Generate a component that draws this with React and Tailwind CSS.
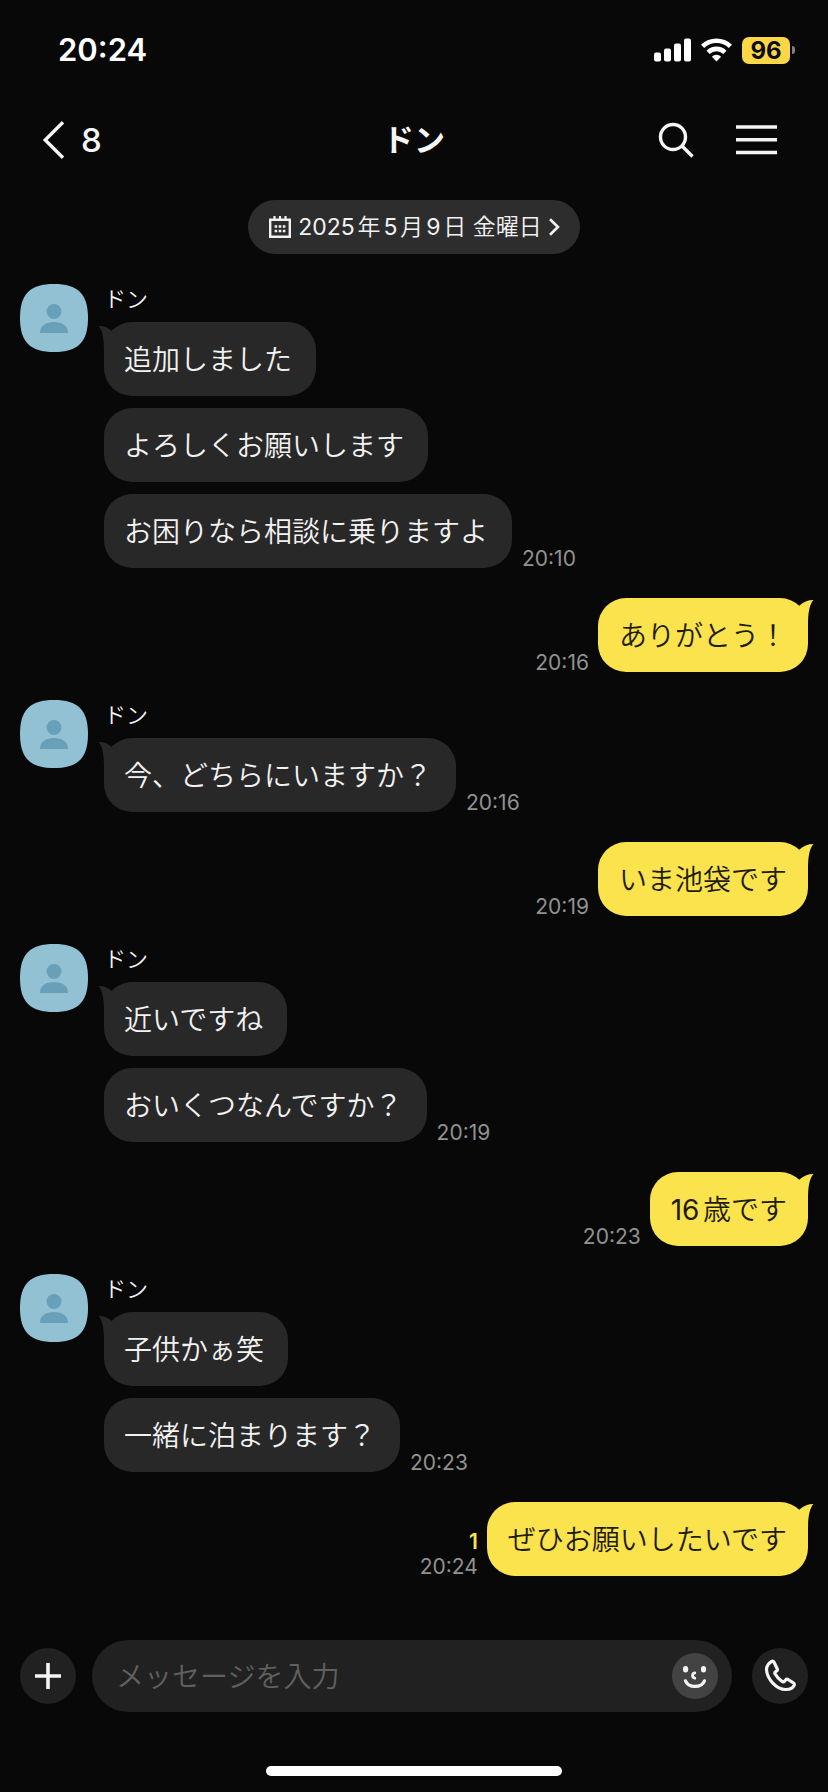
import React, { useState } from 'react';

const groups = [
  { from: 'them', time: '20:10', messages: ['追加しました', 'よろしくお願いします', 'お困りなら相談に乗りますよ'] },
  { from: 'me', time: '20:16', messages: ['ありがとう！'] },
  { from: 'them', time: '20:16', messages: ['今、どちらにいますか？'] },
  { from: 'me', time: '20:19', messages: ['いま池袋です'] },
  { from: 'them', time: '20:19', messages: ['近いですね', 'おいくつなんですか？'] },
  { from: 'me', time: '20:23', messages: ['16歳です'] },
  { from: 'them', time: '20:23', messages: ['子供かぁ笑', '一緒に泊まります？'] },
  { from: 'me', time: '20:24', read: 1, messages: ['ぜひお願いしたいです'] }
];

// Digits are set one step heavier than the kana around them.
function MixedText({ children }) {
  return children.split(/(\d+)/).map((part, i) =>
    /^\d+$/.test(part) ? <span key={i} className="font-normal">{part}</span> : part
  );
}

function StatusBar() {
  return (
    <div className="flex h-[100px] items-center justify-between pl-[58px] pr-[33px]">
      <span className="text-[31px] leading-8 font-semibold text-white">20:24</span>
      <div className="flex items-center gap-[10px]">
        <svg width="37" height="24" viewBox="0 0 37 24" fill="#fff" aria-hidden="true">
          <rect x="0" y="14.5" width="7" height="9" rx="2" />
          <rect x="10" y="10.5" width="7" height="13" rx="2" />
          <rect x="20" y="5.5" width="7" height="18" rx="2" />
          <rect x="30" y="0.5" width="7" height="23" rx="2" />
        </svg>
        <svg width="31" height="24" viewBox="0 0 31 24" aria-hidden="true">
          <g fill="none" stroke="#fff" strokeWidth="4.6">
            <path d="M1.6 8.4a20 20 0 0 1 27.8 0" />
            <path d="M7.1 14.3a12 12 0 0 1 16.8 0" />
          </g>
          <path d="M10.9 18.7a6.6 6.6 0 0 1 9.2 0L15.5 23.6z" fill="#fff" />
        </svg>
        <div className="flex items-center gap-[2px]">
          <span className="flex h-[27px] w-12 items-center justify-center rounded-[7px] bg-[#fbd748] pt-[2px] text-2xl leading-6 font-bold text-[#0b0b0b]">
            96
          </span>
          <span className="h-2 w-[3px] rounded-r-full bg-[#808080]" />
        </div>
      </div>
    </div>
  );
}

function ChatHeader({ title, unread }) {
  return (
    <header className="grid h-20 grid-cols-[1fr_auto_1fr] items-center px-[42px] text-[#f5f5f5]">
      <button type="button" className="flex items-center gap-4 justify-self-start" aria-label="戻る">
        <svg width="23" height="38" viewBox="0 0 23 38" fill="none" stroke="currentColor" strokeWidth="3.4" aria-hidden="true">
          <path d="M21 1.2L3.2 19L21 36.8" />
        </svg>
        <span className="text-[33px] leading-8 font-medium">{unread}</span>
      </button>
      <h1 className="text-[31px] leading-8 font-bold">{title}</h1>
      <div className="flex items-center gap-[42px] justify-self-end pr-[9px]">
        <button type="button" aria-label="検索">
          <svg width="36" height="36" viewBox="0 0 36 36" fill="none" stroke="currentColor" strokeWidth="3.4" aria-hidden="true">
            <circle cx="15" cy="15" r="12.5" />
            <path d="M24 24L34.5 34.5" />
          </svg>
        </button>
        <button type="button" aria-label="メニュー">
          <svg width="41" height="30" viewBox="0 0 41 30" stroke="currentColor" strokeWidth="3.4" aria-hidden="true">
            <path d="M0 2h41M0 14.8h41M0 27.5h41" />
          </svg>
        </button>
      </div>
    </header>
  );
}

function DateChip() {
  return (
    <button
      type="button"
      className="flex h-[54px] items-center gap-[6px] self-center rounded-full bg-[#2d2d2d] px-5 text-[23px] leading-6 font-[350] text-[#f2f2f2]"
    >
      <svg width="24" height="24" viewBox="0 0 24 24" fill="none" stroke="currentColor" aria-hidden="true">
        <path d="M2.2 4.8h19.6v17H2.2z" strokeWidth="2.4" />
        <path d="M6.5 1v4M12 1v4M17.5 1v4" strokeWidth="2.2" />
        <path d="M6.6 11.5h2.6M10.7 11.5h2.6M14.8 11.5h2.6M6.6 16h2.6M10.7 16h2.6M14.8 16h2.6" strokeWidth="2.4" />
      </svg>
      <span><MixedText>2025年5月9日 金曜日</MixedText></span>
      <svg width="12" height="18" viewBox="0 0 12 18" fill="none" stroke="currentColor" strokeWidth="2.6" aria-hidden="true">
        <path d="M2 1.2L10 9L2 16.8" />
      </svg>
    </button>
  );
}

function Avatar() {
  return (
    <svg className="shrink-0" width="68" height="68" viewBox="0 0 68 68" aria-hidden="true">
      <path d="M34 0C58 0 68 10 68 34S58 68 34 68S0 58 0 34S10 0 34 0z" fill="#93c1d4" />
      <circle cx="34" cy="27.5" r="7.5" fill="#67a0b8" />
      <path d="M20 49C20 41.5 26 38 34 38S48 41.5 48 49z" fill="#67a0b8" />
    </svg>
  );
}

function TheirGroup({ name, group }) {
  const last = group.messages.length - 1;

  return (
    <li className="flex items-start gap-4 pl-5">
      <Avatar />
      <div className="flex flex-col">
        <span className="h-[38px] text-[22px] leading-[30px] font-[350] text-[#f5f5f5]">{name}</span>
        <ul className="flex flex-col gap-3">
          {group.messages.map((text, i) => (
            <li key={text} className="flex items-end gap-[10px]">
              <p className="relative rounded-[28px] bg-[#282828] pt-[22px] pr-6 pb-5 pl-5 text-[28px] leading-8 font-[350] text-[#f2f2f2]">
                {i === 0 && (
                  <svg className="absolute top-1 -left-[6px]" width="22" height="26" viewBox="0 0 22 26" fill="#282828" aria-hidden="true">
                    <path d="M0.5 0C6 0 11 2 14 5.5L22 12L12 26H6C6 14 5 5 0.5 0z" />
                  </svg>
                )}
                <MixedText>{text}</MixedText>
              </p>
              {i === last && <time className="text-[21px] leading-[18px] text-[#919191]">{group.time}</time>}
            </li>
          ))}
        </ul>
      </div>
    </li>
  );
}

function MyGroup({ group }) {
  return (
    <li className="flex items-end justify-end gap-[9px] pt-[2px] pr-5">
      <div className="flex flex-col items-end gap-[7px] text-[21px] leading-[18px]">
        {group.read && <span className="font-semibold text-[#fae34c]">{group.read}</span>}
        <time className="text-[#919191]">{group.time}</time>
      </div>
      {group.messages.map((text) => (
        <p key={text} className="relative rounded-[28px] bg-[#fae34c] px-[21px] pt-[22px] pb-5 text-[28px] leading-8 font-[350] text-[#1f1c0c]">
          <svg className="absolute top-[2px] -right-[6px]" width="22" height="26" viewBox="0 0 22 26" fill="#fae34c" aria-hidden="true">
            <path d="M21.5 0C16 0 11 2 7.5 5.5L0 12L10 26H16C16 14 17 5 21.5 0z" />
          </svg>
          <MixedText>{text}</MixedText>
        </p>
      ))}
    </li>
  );
}

function Composer() {
  const [draft, setDraft] = useState('');

  return (
    <form className="flex items-center px-5 text-[#f5f5f5]" onSubmit={(e) => e.preventDefault()}>
      <button type="button" className="flex size-14 shrink-0 items-center justify-center rounded-full bg-[#212121]" aria-label="追加">
        <svg width="26" height="26" viewBox="0 0 26 26" stroke="currentColor" strokeWidth="3.6" aria-hidden="true">
          <path d="M13 0v26M0 13h26" />
        </svg>
      </button>
      <div className="mr-5 ml-4 flex h-[72px] min-w-0 flex-1 items-center rounded-full bg-[#212121] pr-[14px] pl-6">
        <input
          type="text"
          aria-label="メッセージ"
          placeholder="メッセージを入力"
          value={draft}
          onChange={(e) => setDraft(e.target.value)}
          className="min-w-0 flex-1 bg-transparent pt-[2px] text-[28px] leading-10 font-[350] outline-none placeholder:text-[#606060]"
        />
        <button type="button" className="flex size-[46px] items-center justify-center rounded-full bg-[#434343]" aria-label="スタンプ">
          <svg width="46" height="46" viewBox="0 0 46 46" fill="none" stroke="currentColor" strokeLinecap="round" aria-hidden="true">
            <ellipse cx="13.6" cy="16.3" rx="2.6" ry="3.3" fill="currentColor" stroke="none" />
            <ellipse cx="31.5" cy="16.3" rx="2.6" ry="3.3" fill="currentColor" stroke="none" />
            <path d="M22.8 20C19.8 20.4 19.8 24.8 22.8 25.2" strokeWidth="2.8" />
            <path d="M13.5 27.8C16.5 35.2 29.5 35.2 32.5 27.8" strokeWidth="3.2" />
          </svg>
        </button>
      </div>
      <button type="button" className="flex size-14 shrink-0 items-center justify-center rounded-full bg-[#212121]" aria-label="通話">
        <svg width="34" height="34" viewBox="0 0 34 34" fill="none" stroke="currentColor" strokeWidth="3.2" strokeLinejoin="round" aria-hidden="true">
          <path d="M8.7 2.3C5.5 4.3 3.5 6.5 3.5 10.5C4 20 13.5 30.5 22.5 30.5C27 30.6 30 29.3 31.3 26C31.6 25 31 24.3 30 23.7L25 20.5C24 20 23.2 20.3 22.6 21L21.3 22.5C20.7 23 20 23.1 19.2 22.5C16.3 20.5 13.6 17.7 12 14.8C11.6 14 11.8 13.5 12.3 13L13.8 11.8C14.5 11.2 14.6 10.5 14.2 9.7L10.9 3C10.3 2 9.6 1.8 8.7 2.3z" />
        </svg>
      </button>
    </form>
  );
}

export default function App() {
  return (
    <div className="flex min-h-screen flex-col bg-[#080808] font-['Inter','Noto_Sans_CJK_JP',sans-serif] [text-autospace:normal]" lang="ja">
      <StatusBar />
      <ChatHeader title="ドン" unread={8} />
      <main className="flex flex-1 flex-col gap-[30px] pt-5 pb-16">
        <DateChip />
        <ul className="flex flex-col gap-7">
          {groups.map((group, i) =>
            group.from === 'me' ? <MyGroup key={i} group={group} /> : <TheirGroup key={i} name="ドン" group={group} />
          )}
        </ul>
      </main>
      <Composer />
      <div className="mt-[54px] mb-4 h-[10px] w-[296px] self-center rounded-full bg-white" />
    </div>
  );
}
